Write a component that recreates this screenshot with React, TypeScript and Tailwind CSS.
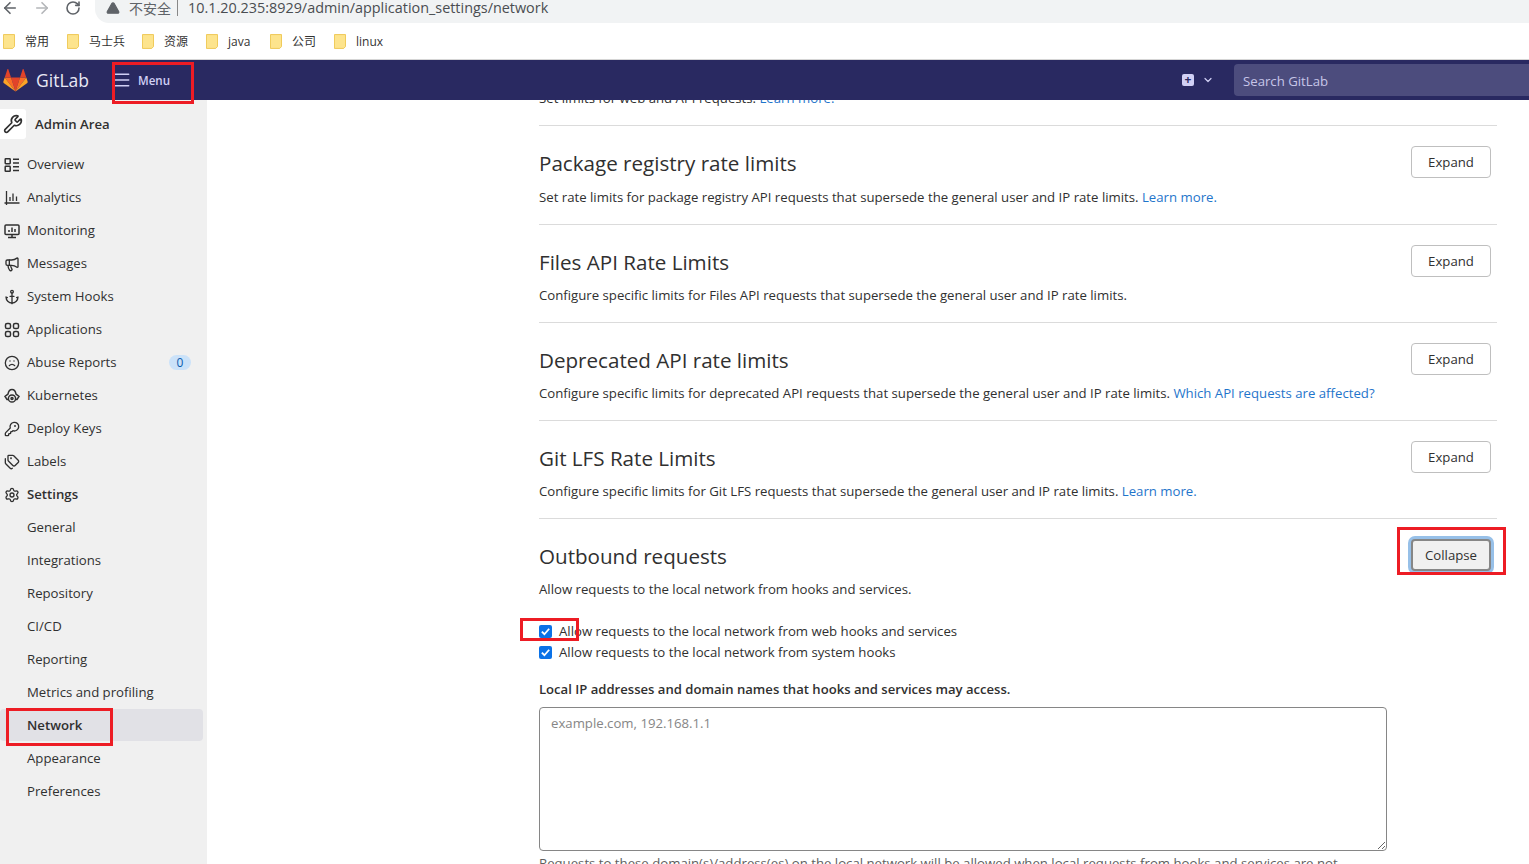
import { ReactNode } from "react";
import {
  AlertTriangle,
  Anchor,
  ArrowLeft,
  ArrowRight,
  ChevronDown,
  Frown,
  KeyRound,
  Megaphone,
  Menu,
  RotateCw,
  Settings,
  Tags,
  Wrench,
} from "lucide-react";

const FONT = "font-['Open_Sans','Noto_Sans_CJK_SC',sans-serif]";

function OverviewIcon() {
  return (
    <svg viewBox="0 0 16 16" className="h-4 w-4" fill="none" stroke="currentColor" strokeWidth="1.5">
      <rect x="1.2" y="1.7" width="5" height="5" rx="0.6" />
      <rect x="1.2" y="9.3" width="5" height="5" rx="0.6" />
      <path d="M9 2.2h6M9 5.9h6M9 9.7h6M9 13.5h6" />
    </svg>
  );
}

function AnalyticsIcon() {
  return (
    <svg viewBox="0 0 16 16" className="h-4 w-4" fill="none" stroke="currentColor" strokeWidth="1.3">
      <path d="M2.5 1v14M.5 13h15M6 11V7M9 11V3.5M12.5 11V6.5" />
    </svg>
  );
}

function MonitoringIcon() {
  return (
    <svg viewBox="0 0 16 16" className="h-4 w-4" fill="none" stroke="currentColor" strokeWidth="1.5">
      <rect x="1" y="2" width="14" height="9.5" rx="1" />
      <path d="M4 14.5h8M8 11.5v3M5 9V7M8 9V4.5M11 9V6" />
    </svg>
  );
}

function AppsIcon() {
  return (
    <svg viewBox="0 0 16 16" className="h-4 w-4" fill="none" stroke="currentColor" strokeWidth="1.5">
      <rect x="1.5" y="1.5" width="5" height="5" rx="1.6" />
      <rect x="9.5" y="1.5" width="5" height="5" rx="1.6" />
      <rect x="1.5" y="9.5" width="5" height="5" rx="1.6" />
      <rect x="9.5" y="9.5" width="5" height="5" rx="1.6" />
    </svg>
  );
}

function KubernetesIcon() {
  return (
    <svg viewBox="0 0 16 16" className="h-4 w-4" fill="none" stroke="currentColor" strokeWidth="1.5">
      <path d="M4 11.5H3L1 8.5l3-2.5C4.5 3 6.5 1.5 8 1.5S11.5 3 12 6l3 2.5-2 3h-1" />
      <circle cx="8" cy="10.5" r="3.6" />
      <circle cx="8" cy="10.5" r="1" />
    </svg>
  );
}

function Tanuki() {
  return (
    <svg viewBox="0 0 25 24" className="h-[24px] w-[25px]">
      <path d="M12.5 23.5 17 9.5H8z" fill="#e24329" />
      <path d="M12.5 23.5 8 9.5H1.7z" fill="#fc6d26" />
      <path d="M1.7 9.5.3 13.8c-.1.4 0 .8.4 1.1l11.8 8.6z" fill="#fca326" />
      <path d="M1.7 9.5H8L5.3 1.2c-.1-.4-.7-.4-.9 0z" fill="#e24329" />
      <path d="M12.5 23.5 17 9.5h6.3z" fill="#fc6d26" />
      <path d="m23.3 9.5 1.4 4.3c.1.4 0 .8-.4 1.1l-11.8 8.6z" fill="#fca326" />
      <path d="M23.3 9.5H17l2.7-8.3c.1-.4.7-.4.9 0z" fill="#e24329" />
    </svg>
  );
}

function Folder() {
  return (
    <svg viewBox="0 0 13 16" className="h-[15px] w-[12px]">
      <path d="M.5.5h12v13l-2 2H.5z" fill="#fde48d" stroke="#eec64f" />
    </svg>
  );
}

const bookmarks = ["常用", "马士兵", "资源", "java", "公司", "linux"];

function BrowserChrome() {
  return (
    <div className="shrink-0 bg-white">
      <div className="flex h-[23px] text-[#5f6368]">
        <div className="flex items-center pb-[7px]">
          <ArrowLeft className="ml-px h-[18px] w-[18px]" strokeWidth={2.2} />
          <ArrowRight className="ml-[14px] h-[18px] w-[18px] text-[#b4b6b9]" strokeWidth={2.2} />
          <RotateCw className="ml-[14px] h-[16px] w-[16px]" strokeWidth={2.4} />
        </div>
        <div className="ml-[14px] flex flex-1 items-center rounded-bl-[14px] bg-[#f1f3f4] pb-[7px] pl-[11px]">
          <AlertTriangle className="h-[14px] w-[14px] fill-[#5f6368] text-[#5f6368]" />
          <span className="ml-[9px] text-[14px] text-[#5f6368]">不安全</span>
          <span className="ml-[6px] h-[16px] w-px bg-[#888]" />
          <span className="ml-[10px] text-[14.4px] text-[#4a4d51]">10.1.20.235:8929/admin/application_settings/network</span>
        </div>
      </div>
      <div className="flex h-[37px] items-center border-b border-[#d5d5d5] pl-[3px] pt-px">
        {bookmarks.map((label) => (
          <div key={label} className="mr-[17px] flex items-center gap-[10px] text-[12px] text-[#333]">
            <Folder />
            <span className="min-w-[25px]">{label}</span>
          </div>
        ))}
      </div>
    </div>
  );
}

function TopBar() {
  return (
    <header className="flex h-[40px] shrink-0 items-center bg-[#292961]">
      <div className="ml-[3px]">
        <Tanuki />
      </div>
      <span className="ml-[8px] text-[17.5px] text-[#e8e8f5]">GitLab</span>
      <Menu className="ml-[23px] h-[20px] w-[20px] text-[#d1d0f5]" strokeWidth={1.8} />
      <span className="ml-[6px] pt-[2px] text-[11.6px] font-semibold text-[#d1d0f5]">Menu</span>
      <div className="ml-auto flex items-center">
        <span className="flex h-[12px] w-[12px] items-center justify-center rounded-[2px] bg-[#d1d0f5] text-[12px] font-bold leading-none text-[#292961]">
          +
        </span>
        <ChevronDown className="ml-[8px] h-[12px] w-[12px] text-[#d1d0f5]" strokeWidth={2.4} />
        <div className="ml-[20px] flex h-[32px] w-[295px] items-center rounded-l-[4px] bg-[#4c4c7d] pl-[9px] pt-[3px] text-[13.2px] text-[#c6c5e8]">
          Search GitLab
        </div>
      </div>
    </header>
  );
}

const primaryNav: { label: string; icon: ReactNode; badge?: string }[] = [
  { label: "Overview", icon: <OverviewIcon /> },
  { label: "Analytics", icon: <AnalyticsIcon /> },
  { label: "Monitoring", icon: <MonitoringIcon /> },
  { label: "Messages", icon: <Megaphone className="h-4 w-4" strokeWidth={2} /> },
  { label: "System Hooks", icon: <Anchor className="h-4 w-4" strokeWidth={2} /> },
  { label: "Applications", icon: <AppsIcon /> },
  { label: "Abuse Reports", icon: <Frown className="h-4 w-4" strokeWidth={2} />, badge: "0" },
  { label: "Kubernetes", icon: <KubernetesIcon /> },
  { label: "Deploy Keys", icon: <KeyRound className="h-4 w-4" strokeWidth={2} /> },
  { label: "Labels", icon: <Tags className="h-4 w-4" strokeWidth={2} /> },
  { label: "Settings", icon: <Settings className="h-4 w-4" strokeWidth={2} /> },
];

const settingsNav = [
  "General",
  "Integrations",
  "Repository",
  "CI/CD",
  "Reporting",
  "Metrics and profiling",
  "Network",
  "Appearance",
  "Preferences",
];

function Sidebar() {
  return (
    <aside className="flex w-[207px] shrink-0 flex-col bg-[#f0f0f0] text-[13.2px] text-[#303030]">
      <div className="mt-[9px] flex h-[30px] items-center">
        <div className="flex h-[30px] w-[26px] items-center justify-center rounded-r-[3px] bg-white">
          <Wrench className="h-[20px] w-[20px]" strokeWidth={2} />
        </div>
        <span className="ml-[9px] pt-[2px] font-semibold">Admin Area</span>
      </div>
      <nav className="mt-[9px] flex flex-col">
        {primaryNav.map((item) => (
          <div key={item.label} className="flex h-[33px] items-center pl-[4px] pr-[16px]">
            <span className="flex w-[23px] shrink-0">{item.icon}</span>
            <span className={item.label === "Settings" ? "font-semibold" : ""}>{item.label}</span>
            {item.badge && (
              <span className="ml-auto flex h-[15px] w-[22px] items-center justify-center rounded-full bg-[#cbe2f9] text-[12px] text-[#0b5cad]">
                {item.badge}
              </span>
            )}
          </div>
        ))}
        {settingsNav.map((label) => (
          <div
            key={label}
            className={
              label === "Network"
                ? "mb-px mr-[4px] flex h-[32px] items-center rounded-[4px] bg-[#e1e1e6] pl-[27px] pt-px font-semibold"
                : "flex h-[33px] items-center pl-[27px]"
            }
          >
            {label}
          </div>
        ))}
      </nav>
    </aside>
  );
}

function RateSection({
  title,
  text,
  link,
  height,
  textGap = "mt-[7px]",
}: {
  title: string;
  text: string;
  link?: string;
  height: string;
  textGap?: string;
}) {
  return (
    <section className={`flex justify-between border-t border-[#dbdbdb] pr-[6px] ${height}`}>
      <div>
        <h4 className="mt-[21px] text-[20.6px] font-medium leading-[32px] text-[#303030]">{title}</h4>
        <p className={`${textGap} text-[13.2px] leading-[20px] text-[#303030]`}>
          {text}
          {link && <a className="text-[#1f75cb]"> {link}</a>}
        </p>
      </div>
      <button className="mt-[20px] h-[32px] w-[80px] rounded-[4px] border border-[#bfbfbf] bg-white pt-[2px] text-[13.2px] text-[#303030]">
        Expand
      </button>
    </section>
  );
}

function CheckRow({ label }: { label: string }) {
  return (
    <label className="flex h-[21px] items-center text-[13.2px] text-[#303030]">
      <span className="flex h-[13px] w-[13px] items-center justify-center rounded-[2px] bg-[#0b72e7]">
        <svg viewBox="0 0 12 12" className="h-[11px] w-[11px]" fill="none" stroke="white" strokeWidth="2">
          <path d="M2 6.2 4.8 9 10 3" />
        </svg>
      </span>
      <span className="ml-[7px]">{label}</span>
    </label>
  );
}

function Content() {
  return (
    <main className="relative min-w-0 flex-1 overflow-hidden pl-[332px] pr-[32px]">
      <p className="-mt-[12px] h-[37px] text-[13.2px] leading-[20px] text-[#303030]">
        Set limits for web and API requests. <a className="text-[#1f75cb]">Learn more.</a>
      </p>
      <RateSection
        height="h-[99px]"
        textGap="mt-[8px]"
        title="Package registry rate limits"
        text="Set rate limits for package registry API requests that supersede the general user and IP rate limits."
        link="Learn more."
      />
      <RateSection
        height="h-[98px]"
        title="Files API Rate Limits"
        text="Configure specific limits for Files API requests that supersede the general user and IP rate limits."
      />
      <RateSection
        height="h-[98px]"
        title="Deprecated API rate limits"
        text="Configure specific limits for deprecated API requests that supersede the general user and IP rate limits."
        link="Which API requests are affected?"
      />
      <RateSection
        height="h-[98px]"
        title="Git LFS Rate Limits"
        text="Configure specific limits for Git LFS requests that supersede the general user and IP rate limits."
        link="Learn more."
      />
      <section className="border-t border-[#dbdbdb]">
        <div className="flex justify-between pr-[6px]">
          <div>
            <h4 className="mt-[21px] text-[20.6px] font-medium leading-[32px] text-[#303030]">Outbound requests</h4>
            <p className="mt-[7px] text-[13.2px] leading-[20px] text-[#303030]">
              Allow requests to the local network from hooks and services.
            </p>
          </div>
          <button className="mt-[20px] h-[32px] w-[80px] rounded-[4px] border-2 border-[#868686] bg-[#f0f0f0] pt-[2px] text-[13.2px] text-[#303030] shadow-[0_0_0_3px_#97c0e8]">
            Collapse
          </button>
        </div>
        <div className="mt-[22px] flex flex-col">
          <CheckRow label="Allow requests to the local network from web hooks and services" />
          <CheckRow label="Allow requests to the local network from system hooks" />
        </div>
        <p className="mt-[16px] text-[13.1px] font-semibold leading-[20px] text-[#303030]">
          Local IP addresses and domain names that hooks and services may access.
        </p>
        <textarea
          readOnly
          placeholder="example.com, 192.168.1.1"
          className="mt-[8px] block h-[144px] w-[848px] rounded-[4px] border border-[#868686] px-[11px] py-[6px] text-[13.2px] outline-none placeholder:text-[#868686]"
        />
        <p className="mt-[2px] whitespace-nowrap text-[13.2px] leading-[20px] text-[#5e5e5e]">
          Requests to these domain(s)/address(es) on the local network will be allowed when local requests from hooks and services are not
        </p>
      </section>
    </main>
  );
}

// red annotation boxes drawn on top of the screenshot
const marks = [
  "left-[112px] top-[62px] h-[42px] w-[82px]",
  "left-[6px] top-[708px] h-[38px] w-[107px]",
  "left-[520px] top-[618px] h-[23px] w-[59px]",
  "left-[1397px] top-[527px] h-[48px] w-[109px]",
];

export default function App() {
  return (
    <div className={`relative flex h-[864px] w-[1529px] flex-col overflow-hidden bg-white ${FONT}`}>
      <BrowserChrome />
      <TopBar />
      <div className="flex min-h-0 flex-1">
        <Sidebar />
        <Content />
      </div>
      {marks.map((mark) => (
        <div key={mark} className={`absolute border-[3px] border-[#ed1c24] ${mark}`} />
      ))}
    </div>
  );
}
